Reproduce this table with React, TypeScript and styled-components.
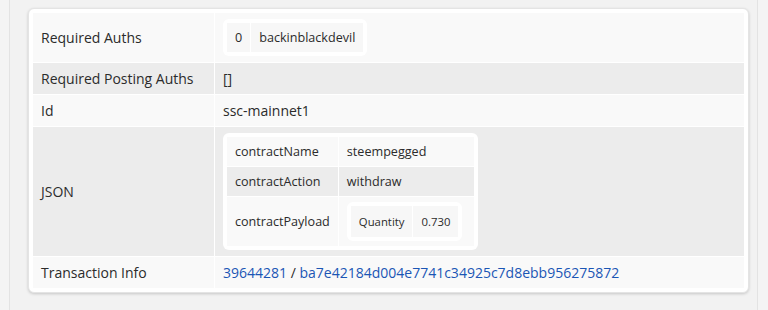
import styled, { createGlobalStyle } from 'styled-components';

const GlobalStyle = createGlobalStyle`
  body {
    margin: 0;
    background: #f4f4f4;
    font-family: 'Open Sans', 'Liberation Sans', sans-serif;
    color: #2b2b2b;
  }
`;

const Page = styled.div`
  margin-left: 9px;
  width: 749px;
  min-height: 310px;
  box-sizing: border-box;
  border-left: 1px solid #e3e3e3;
  border-right: 1px solid #e3e3e3;
  background: #f2f2f2;
  padding: 8px 8px 0 18px;
`;

const Card = styled.div`
  background: #fff;
  border-radius: 6px;
  padding: 3px;
  box-shadow: 0 1px 3px rgba(0, 0, 0, 0.18);
  border: 1px solid #e4e4e4;
`;

const Table = styled.table`
  width: 100%;
  border-collapse: separate;
  border-spacing: 1px;
  font-size: 14px;
`;

const Row = styled.tr<{ $alt?: boolean }>`
  background: ${(p) => (p.$alt ? '#ececec' : '#f9f9f9')};
`;

const Label = styled.td`
  width: 165px;
  padding: 6px 8px;
  line-height: 19px;
  vertical-align: middle;
`;

const Value = styled.td`
  padding: 6px 8px;
  line-height: 19px;
  vertical-align: middle;
`;

const Box = styled.div`
  display: block;
  width: fit-content;
  background: #fff;
  border-radius: 6px;
  padding: 3px;
`;

// each nested level shrinks the text a little
const Inner = styled.table`
  border-collapse: separate;
  border-spacing: 1px;
  font-size: 0.9em;
`;

const InnerRow = styled.tr<{ $alt?: boolean; $plain?: boolean }>`
  background: ${(p) => (p.$plain ? '#f7f7f7' : p.$alt ? '#ececec' : '#f9f9f9')};
`;

const InnerCell = styled.td<{ $tall?: boolean }>`
  padding: ${(p) => (p.$tall ? '6px 8px' : '5px 8px')};
  line-height: 19px;
  vertical-align: middle;
  white-space: nowrap;
`;

const ValueCell = styled(InnerCell)`
  width: 119px;
`;

const Link = styled.a`
  color: #1b56b5;
  text-decoration: none;
`;

const Slash = styled.span`
  color: #2b2b2b;
`;

export default function App() {
  return (
    <>
      <GlobalStyle />
      <Page>
        <Card>
          <Table>
            <tbody>
              <Row>
                <Label>Required Auths</Label>
                <Value>
                  <Box>
                    <Inner>
                      <tbody>
                        <InnerRow $plain>
                          <InnerCell>0</InnerCell>
                          <InnerCell>backinblackdevil</InnerCell>
                        </InnerRow>
                      </tbody>
                    </Inner>
                  </Box>
                </Value>
              </Row>
              <Row $alt>
                <Label>Required Posting Auths</Label>
                <Value>[]</Value>
              </Row>
              <Row>
                <Label>Id</Label>
                <Value>ssc-mainnet1</Value>
              </Row>
              <Row $alt>
                <Label>JSON</Label>
                <Value>
                  <Box>
                    <Inner>
                      <tbody>
                        <InnerRow>
                          <InnerCell>contractName</InnerCell>
                          <ValueCell>steempegged</ValueCell>
                        </InnerRow>
                        <InnerRow $alt>
                          <InnerCell>contractAction</InnerCell>
                          <ValueCell>withdraw</ValueCell>
                        </InnerRow>
                        <InnerRow>
                          <InnerCell>contractPayload</InnerCell>
                          <ValueCell>
                            <Box>
                              <Inner>
                                <tbody>
                                  <InnerRow $plain>
                                    <InnerCell $tall>Quantity</InnerCell>
                                    <InnerCell $tall>0.730</InnerCell>
                                  </InnerRow>
                                </tbody>
                              </Inner>
                            </Box>
                          </ValueCell>
                        </InnerRow>
                      </tbody>
                    </Inner>
                  </Box>
                </Value>
              </Row>
              <Row>
                <Label>Transaction Info</Label>
                <Value>
                  <Link href="#">39644281</Link>
                  <Slash> / </Slash>
                  <Link href="#">ba7e42184d004e7741c34925c7d8ebb956275872</Link>
                </Value>
              </Row>
            </tbody>
          </Table>
        </Card>
      </Page>
    </>
  );
}
